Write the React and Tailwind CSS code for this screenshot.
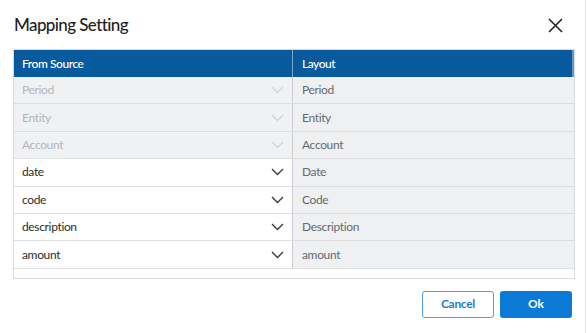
import React from 'react';

const rows = [
  { source: 'Period', layout: 'Period', locked: true },
  { source: 'Entity', layout: 'Entity', locked: true },
  { source: 'Account', layout: 'Account', locked: true },
  { source: 'date', layout: 'Date' },
  { source: 'code', layout: 'Code' },
  { source: 'description', layout: 'Description' },
  { source: 'amount', layout: 'amount' },
];

const Chevron = ({ className }) => (
  <svg width="13" height="8" viewBox="0 0 13 8" fill="none" className={className}>
    <path d="M1 1l5.5 5.5L12 1" stroke="currentColor" strokeWidth="1.4" />
  </svg>
);

const MappingRow = ({ row }) => (
  <div className="flex h-[27.4px] border-b border-[#dcdde0] text-[12px] tracking-[-0.35px]">
    <div
      className={`w-[278px] flex items-center justify-between pl-2 pr-[8px] ${
        row.locked ? 'bg-[#f0f1f3] text-[#b3b5b8]' : 'bg-white text-[#2d2d2d]'
      }`}
    >
      <span>{row.source}</span>
      <Chevron className={row.locked ? 'text-[#d2d4d7]' : 'text-[#3a3a3a]'} />
    </div>
    <div className="flex-1 flex items-center pl-[9px] bg-[#eff0f2] text-[#666a6e] border-l border-[#c9cbce]">
      {row.layout}
    </div>
  </div>
);

export default function App() {
  return (
    <div
      className="w-[586px] h-[333px] bg-white border-r border-[#e4e5e7] flex flex-col"
      style={{ fontFamily: 'Lato, "Open Sans", sans-serif' }}
    >
      {/* Title bar */}
      <div className="flex items-center justify-between h-[49px] pl-[14px] pr-[22px] pt-[1px]">
        <h2 className="text-[17px] font-medium text-[#1f1f1f] tracking-[-0.6px]">Mapping Setting</h2>
        <svg width="15" height="15" viewBox="0 0 15 15" className="text-[#222]">
          <path d="M1 1l13 13M14 1L1 14" stroke="currentColor" strokeWidth="1.6" />
        </svg>
      </div>

      {/* Table */}
      <div className="ml-[13px] w-[562px] border border-[#d9dadd]">
        <div className="flex h-[27px] bg-[#075b9d] text-white text-[12px] font-medium tracking-[-0.45px]">
          <div className="w-[278px] flex items-center pl-2">From Source</div>
          <div className="flex-1 flex items-center pl-[9px] border-l border-[#7fa6c8]">Layout</div>
          <div className="w-[2px] bg-[#5f9bd0]" />
        </div>
        {rows.map((row) => (
          <MappingRow key={row.source} row={row} />
        ))}
        <div className="h-[9px] bg-white" />
      </div>

      {/* Footer */}
      <div className="flex justify-end gap-[6px] pr-[13px] mt-[12px]">
        <button className="w-[72px] h-[27px] rounded-[3px] border border-[#4d9fe0] text-[#1a7dd2] text-[12px] font-bold tracking-[-0.3px] bg-white">
          Cancel
        </button>
        <button className="w-[72px] h-[27px] rounded-[3px] bg-[#0b7ad6] text-white text-[12px] font-bold">
          Ok
        </button>
      </div>
    </div>
  );
}
